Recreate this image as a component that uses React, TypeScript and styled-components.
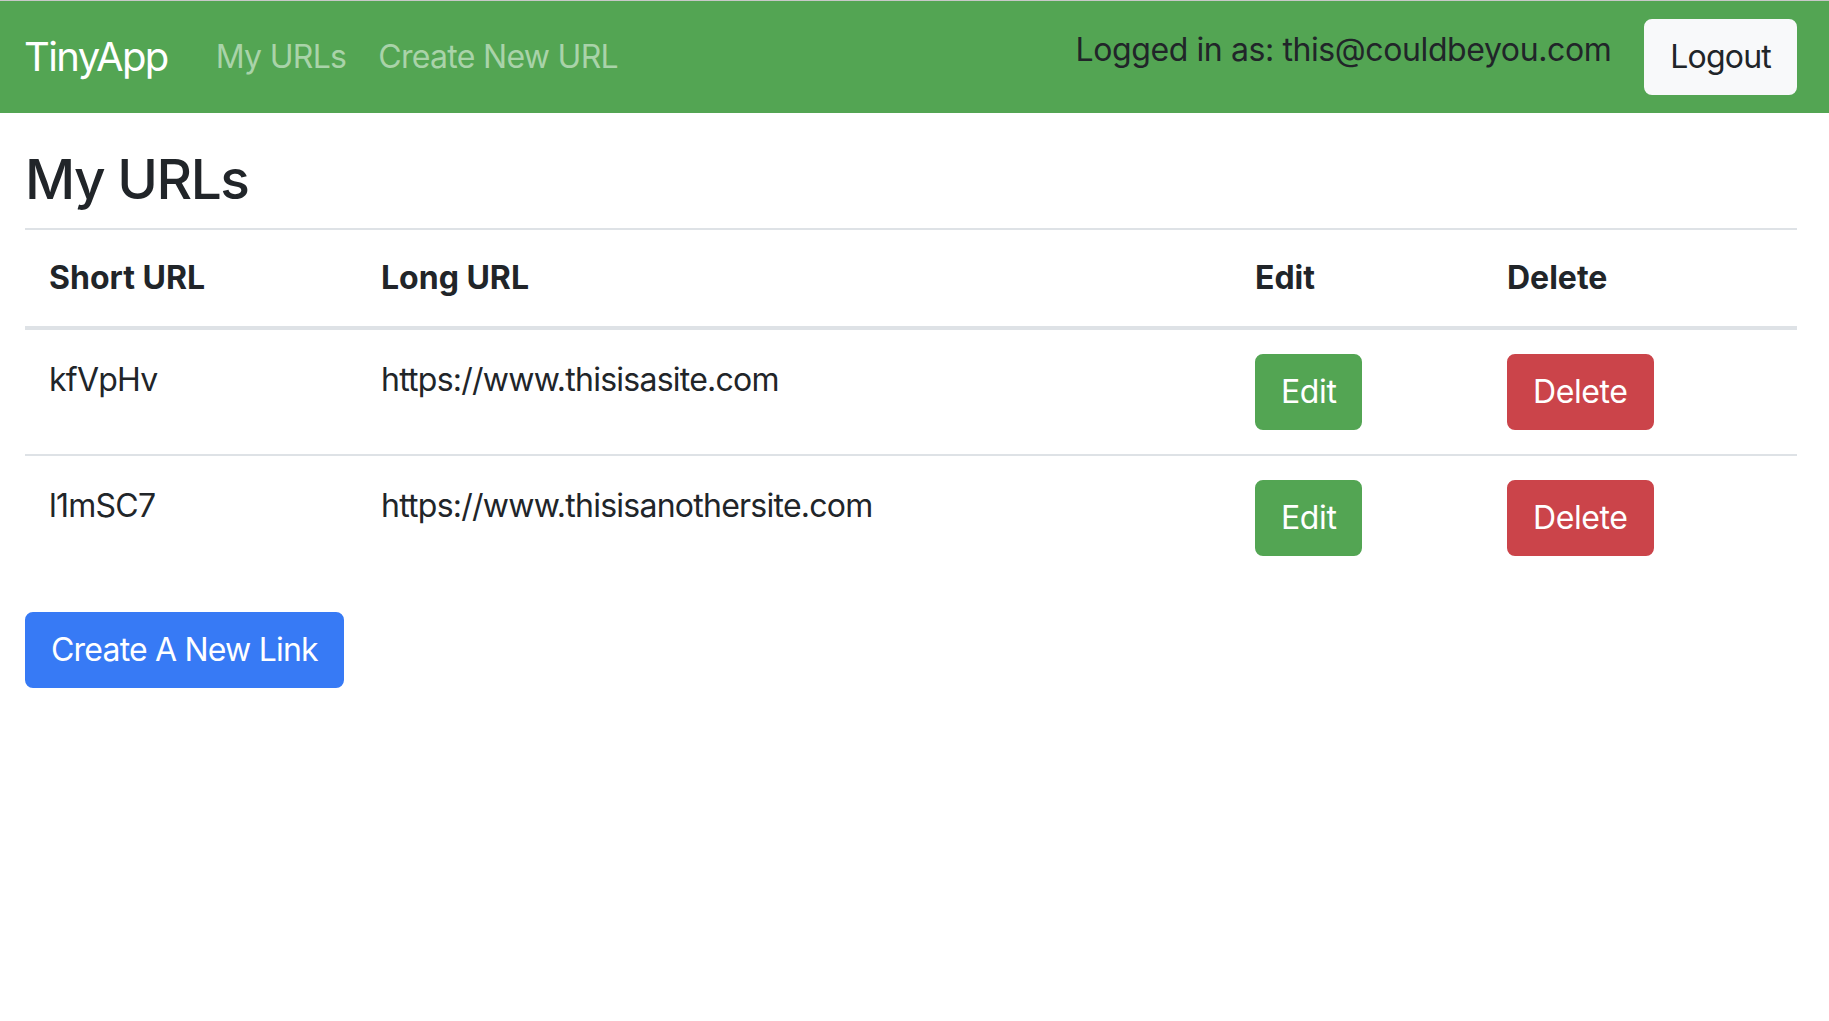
import React from "react";
import styled, { createGlobalStyle } from "styled-components";

const GlobalStyle = createGlobalStyle`
  * { box-sizing: border-box; }
  html, body { margin: 0; padding: 0; background: #ffffff; }
  body {
    font-family: Inter, "Noto Sans", "Liberation Sans", sans-serif;
    color: #212529;
    -webkit-font-smoothing: antialiased;
  }
`;

const Navbar = styled.nav`
  display: flex;
  align-items: center;
  height: 113px;
  padding: 0 32px 0 24px;
  background: #53a553;
  border-top: 1px solid #c8c8c8;
`;

const Brand = styled.a`
  font-size: 40px;
  line-height: 60px;
  color: #ffffff;
  margin-right: 32px;
  text-decoration: none;
  letter-spacing: -1.6px;
`;

const NavLink = styled.a`
  font-size: 32px;
  line-height: 48px;
  padding: 0 16px;
  color: #a9d3a9;
  text-decoration: none;
  letter-spacing: -0.7px;
`;

const Spacer = styled.div`
  flex: 1;
`;

const UserText = styled.span`
  font-size: 32px;
  line-height: 48px;
  color: #212529;
  margin: 0 33px 14px 0;
  letter-spacing: -0.4px;
`;

const Button = styled.button<{ $bg: string; $fg: string }>`
  display: inline-block;
  vertical-align: top;
  font-family: inherit;
  font-size: 32px;
  line-height: 48px;
  padding: 12px 24px;
  border: 2px solid ${(p) => p.$bg};
  border-radius: 8px;
  background: ${(p) => p.$bg};
  color: ${(p) => p.$fg};
  letter-spacing: -0.4px;
  cursor: pointer;
`;

const LogoutButton = styled(Button)`
  letter-spacing: -0.8px;
`;

const Main = styled.main`
  padding: 0 32px 0 25px;
`;

const Heading = styled.h1`
  font-size: 55px;
  font-weight: 500;
  line-height: 1.2;
  margin: 33px 0 16px;
  letter-spacing: -1.5px;
`;

const Table = styled.table`
  width: 100%;
  border-collapse: separate;
  border-spacing: 0;
  table-layout: fixed;
  font-size: 32px;
  line-height: 48px;
  letter-spacing: -0.75px;
`;

const Th = styled.th`
  text-align: left;
  font-weight: 700;
  padding: 24px;
  border-top: 2px solid #dee2e6;
  border-bottom: 4px solid #dee2e6;
  vertical-align: bottom;
  letter-spacing: 0;
`;

const Row = styled.tr`
  &:not(:first-child) td {
    border-top: 2px solid #dee2e6;
  }
`;

const Td = styled.td`
  padding: 24px;
  vertical-align: top;
  white-space: nowrap;
`;

const CellText = styled.span`
  display: inline-block;
  padding-top: 2px;
`;

const CreateButton = styled(Button)`
  margin-top: 32px;
  letter-spacing: -0.8px;
`;

const rows = [
  { short: "kfVpHv", long: "https://www.thisisasite.com" },
  { short: "l1mSC7", long: "https://www.thisisanothersite.com" },
];

export default function App() {
  return (
    <>
      <GlobalStyle />
      <Navbar>
        <Brand href="#">TinyApp</Brand>
        <NavLink href="#">My URLs</NavLink>
        <NavLink href="#">Create New URL</NavLink>
        <Spacer />
        <UserText>Logged in as: this@couldbeyou.com</UserText>
        <LogoutButton $bg="#f8f9fa" $fg="#212529">Logout</LogoutButton>
      </Navbar>
      <Main>
        <Heading>My URLs</Heading>
        <Table>
          <colgroup>
            <col style={{ width: 332 }} />
            <col style={{ width: 874 }} />
            <col style={{ width: 252 }} />
            <col />
          </colgroup>
          <thead>
            <tr>
              <Th>Short URL</Th>
              <Th>Long URL</Th>
              <Th>Edit</Th>
              <Th>Delete</Th>
            </tr>
          </thead>
          <tbody>
            {rows.map((r) => (
              <Row key={r.short}>
                <Td><CellText>{r.short}</CellText></Td>
                <Td><CellText>{r.long}</CellText></Td>
                <Td>
                  <Button $bg="#53a553" $fg="#ffffff">Edit</Button>
                </Td>
                <Td>
                  <Button $bg="#cb444a" $fg="#ffffff">Delete</Button>
                </Td>
              </Row>
            ))}
          </tbody>
        </Table>
        <CreateButton $bg="#377af5" $fg="#ffffff">Create A New Link</CreateButton>
      </Main>
    </>
  );
}
